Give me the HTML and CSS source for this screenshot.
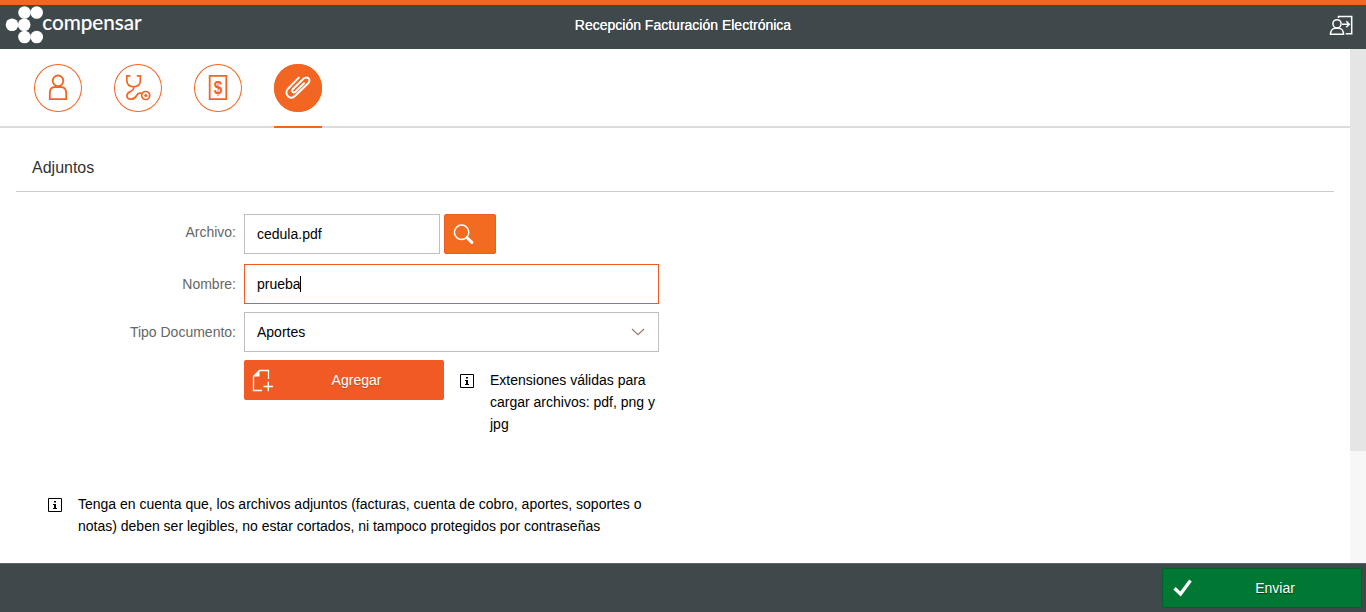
FILE: index.html
```html
<!DOCTYPE html>
<html lang="es">
<head>
<meta charset="utf-8">
<title>Recepción Facturación Electrónica</title>
<link rel="stylesheet" href="styles.css">
</head>
<body>
<div class="app">
  <header class="header">
    <svg class="logo" width="150" height="44" viewBox="0 5 150 44" role="img" aria-label="compensar">
      <g fill="#fff"><circle cx="24.5" cy="12.5" r="6.3"/><circle cx="36.7" cy="12.5" r="6.3"/><circle cx="12" cy="24.7" r="6.3"/><circle cx="24.2" cy="24.7" r="6.3"/><circle cx="24.5" cy="37" r="6.3"/><circle cx="36.7" cy="37" r="6.3"/></g>
      <text class="logo-text" x="42.2" y="30" textLength="99.5" lengthAdjust="spacingAndGlyphs">compensar</text>
    </svg>
    <h1 class="title">Recepción Facturación Electrónica</h1>
    <svg class="logout" width="26" height="24" viewBox="1329 13 26 24" fill="none" stroke="#fff" stroke-width="1.5">
      <circle cx="1338" cy="23.8" r="4.1"/><path d="M1331.500 34.300c0-3.500 2-6 5-6h3c3 0 5 2.500 5 6zM1339.500 18v-1.500h13.200v17.200h-6M1343 24.300h7M1347.300 21.300l3 3-3 3"/>
    </svg>
  </header>
  <div class="body">
    <main class="main">
      <nav class="tabs">
        <a class="tab"><svg width="48" height="48" viewBox="0 0 48 48" fill="none" stroke="#f26522" stroke-width="1.800"><circle cx="24" cy="16.800" r="5.300"/><path d="M15.800 35.200v-6.200c0-3.800 2.200-6 5.500-6h5.400c3.300 0 5.500 2.200 5.500 6v6.200z"/></svg></a>
        <a class="tab"><svg width="48" height="48" viewBox="0 0 48 48" fill="none" stroke="#f26522" stroke-width="1.700"><path d="M16.300 11.900h-3.500v4.300c0 4 3 6.300 6.800 6.700 3.800-.4 6.800-2.700 6.800-6.700v-4.300h-3.500M19.600 23v1.500c0 3-6.700 2.500-6.700 7 0 2.500 1.800 3.700 4.300 3.700 6.200 0 4.300-6 8.500-6h1.800"/><circle cx="31.700" cy="31.500" r="4"/><circle cx="31.700" cy="31.500" r="1.500" fill="#f26522" stroke="none"/></svg></a>
        <a class="tab"><svg width="48" height="48" viewBox="0 0 48 48"><path d="M15.700 11.900h16.600v23.300h-16.600z" fill="none" stroke="#f26522" stroke-width="1.800"/><text class="money" x="24" y="29.500" text-anchor="middle" textLength="8.600" lengthAdjust="spacingAndGlyphs">$</text></svg></a>
        <a class="tab tab-active"><svg width="48" height="48" viewBox="0 0 48 48" fill="none" stroke="#fff" stroke-width="2" stroke-linecap="round" stroke-linejoin="round"><path d="M24.800 13.600 14 24.700c-2.500 2.800-1.800 6 .2 7.700s4.900 1.500 7-.6L34.200 19.200c1.700-1.800 1.600-3.800.2-4.900-1.500-1.200-3.400-1-4.900.4L18.700 25.300c-.9 1-.8 2 0 2.700s1.800.6 2.700-.3L30 19.200"/></svg></a>
      </nav>
      <section class="section">
        <h2 class="heading">Adjuntos</h2>
        <form class="form">
          <label class="label label-file">Archivo:</label>
          <div class="row row-file">
            <div class="field field-file">cedula.pdf</div>
            <button type="button" class="browse" aria-label="Buscar"><svg width="24" height="24" viewBox="452 222 24 24" fill="none" stroke="#fff"><circle cx="461.600" cy="232.300" r="7.200" stroke-width="1.500"/><path d="M466.800 237.500l5.100 4.900" stroke-width="3" stroke-linecap="round"/></svg></button>
          </div>
          <label class="label label-name">Nombre:</label>
          <div class="field field-focus">prueba<span class="caret"></span></div>
          <label class="label">Tipo Documento:</label>
          <div class="field field-select"><span>Aportes</span><svg width="14" height="8" viewBox="0 0 14 8" fill="none" stroke="#9a7668" stroke-width="1.100"><path d="M1 1l6 5.700L13 1"/></svg></div>
          <div class="row row-add">
            <button type="button" class="add"><svg width="24" height="24" viewBox="252 368 24 24" fill="none" stroke="#fff" stroke-width="1.300"><path d="M269.500 379v-8.500h-9l-6 6v14h8.500M264.500 386.500h9.500M269.300 381.800v9.500"/><path d="M254 376.500l6.500-6.500v6.500z" fill="#fff" stroke="none"/></svg><span>Agregar</span></button>
            <svg class="info" width="14" height="14" viewBox="0 0 14 14"><path d="M.5.500h13v13H.5z" fill="none" stroke="#000"/><path d="M6 3h2v1.500H6zM5 6h3v4h1v1H5v-1h1V7H5z"/></svg>
            <p class="text">Extensiones válidas para<br>cargar archivos: pdf, png y<br>jpg</p>
          </div>
        </form>
        <div class="note">
          <svg class="info" width="14" height="14" viewBox="0 0 14 14"><path d="M.5.500h13v13H.5z" fill="none" stroke="#000"/><path d="M6 3h2v1.500H6zM5 6h3v4h1v1H5v-1h1V7H5z"/></svg>
          <p class="text">Tenga en cuenta que, los archivos adjuntos (facturas, cuenta de cobro, aportes, soportes o<br>notas) deben ser legibles, no estar cortados, ni tampoco protegidos por contraseñas</p>
        </div>
      </section>
    </main>
    <div class="scrollbar"><div class="thumb"></div></div>
  </div>
  <footer class="footer">
    <button type="button" class="send"><svg width="20" height="18" viewBox="0 0 20 18" fill="none" stroke="#fff" stroke-width="3.300"><path d="M1.500 9.300l6 5.700L17.500 1.500"/></svg><span>Enviar</span></button>
  </footer>
</div>
</body>
</html>
```
FILE: styles.css
```css
* { box-sizing: border-box; }
body { margin: 0; background: #fff; color: #000; font: 14px/22px "Liberation Sans", Arial, sans-serif; }
h1, h2, p { margin: 0; font-weight: normal; }
button { font: inherit; color: #fff; padding: 0; border: 0; }
svg { flex: none; display: block; }
.app { height: 612px; display: flex; flex-direction: column; overflow: hidden; }
.header { height: 49px; flex: none; border-top: 5px solid #f26522; background: #3f484b; display: grid; grid-template-columns: 1fr auto 1fr; align-items: center; }
.logo-text { font: 500 21px Lato, sans-serif; fill: #fff; stroke: #fff; stroke-width: .1px; }
.title { color: #fff; font-size: 14px; line-height: 41px; height: 44px; text-shadow: 0 0 .6px #fff; }
.logout { justify-self: end; margin: 0 12px 4px 0; }
.body { flex: 1; min-height: 0; display: flex; }
.main { flex: 1; }
.scrollbar { width: 16px; background: #f7f7f7; }
.thumb { height: 402px; background: #e5e5e5; }
.tabs { height: 79px; padding: 15px 34px 0; display: flex; gap: 32px; box-shadow: inset 0 -2px #dcdcdc; }
.tab { width: 48px; height: 64px; }
.tab svg { box-shadow: inset 0 0 0 1px #f26522; border-radius: 50%; }
.tab-active { border-bottom: 2px solid #f26522; }
.tab-active svg { background: #f26522; }
.money { font: bold 18px "Liberation Sans", Arial, sans-serif; fill: #f26522; }
.section { padding: 16px 16px 0; }
.heading { height: 48px; padding-left: 16px; border-bottom: 1px solid #ccc; color: #333; font-size: 16px; line-height: 47px; }
.form { padding-top: 22px; display: grid; grid-template-columns: 220px 415px; gap: 8px; grid-template-rows: 40px 42px 40px auto; }
.label { color: #666; text-align: right; line-height: 40px; }
.label-file { margin-top: -2px; }
.label-name, .field-focus { margin-top: 2px; }
.row { display: flex; align-items: flex-start; }
.row-file { gap: 4px; }
.field { height: 40px; padding-left: 12px; border: 1px solid #bfbfbf; background: #fff; line-height: 38px; display: flex; align-items: center; }
.field-file { width: 196px; }
.field-focus { border-color: #f15a24; }
.caret { width: 1px; height: 16px; margin-left: -1px; background: #000; }
.field-select { justify-content: space-between; padding-right: 13px; }
.browse { width: 52px; height: 40px; padding-left: 7px; border: 1px solid #f15a24; border-radius: 2px; background: #f26b21; }
.row-add { grid-column: 2; }
.add { width: 200px; height: 40px; padding-left: 7px; background: #f15a24; border-radius: 2px; display: flex; align-items: center; }
.add span { flex: 1; text-align: center; padding-right: 6px; text-shadow: 0 1px 1px #0003; }
.row-add .info { margin: 14px 16px 0; }
.row-add .text { padding-top: 9px; }
.note { margin-top: 58px; padding-left: 32px; display: flex; gap: 16px; }
.note .info { margin-top: 5px; }
.footer { height: 49px; flex: none; border-top: 1px solid #596468; background: #3f484b; display: flex; justify-content: flex-end; padding: 4px 4px 0; }
.send { width: 200px; height: 40px; padding-left: 10px; border: 1px solid #006127; border-radius: 2px; background: #007833; display: flex; align-items: center; }
.send span { flex: 1; text-align: center; padding-right: 4px; text-shadow: 0 1px 1px #0008; }
```
